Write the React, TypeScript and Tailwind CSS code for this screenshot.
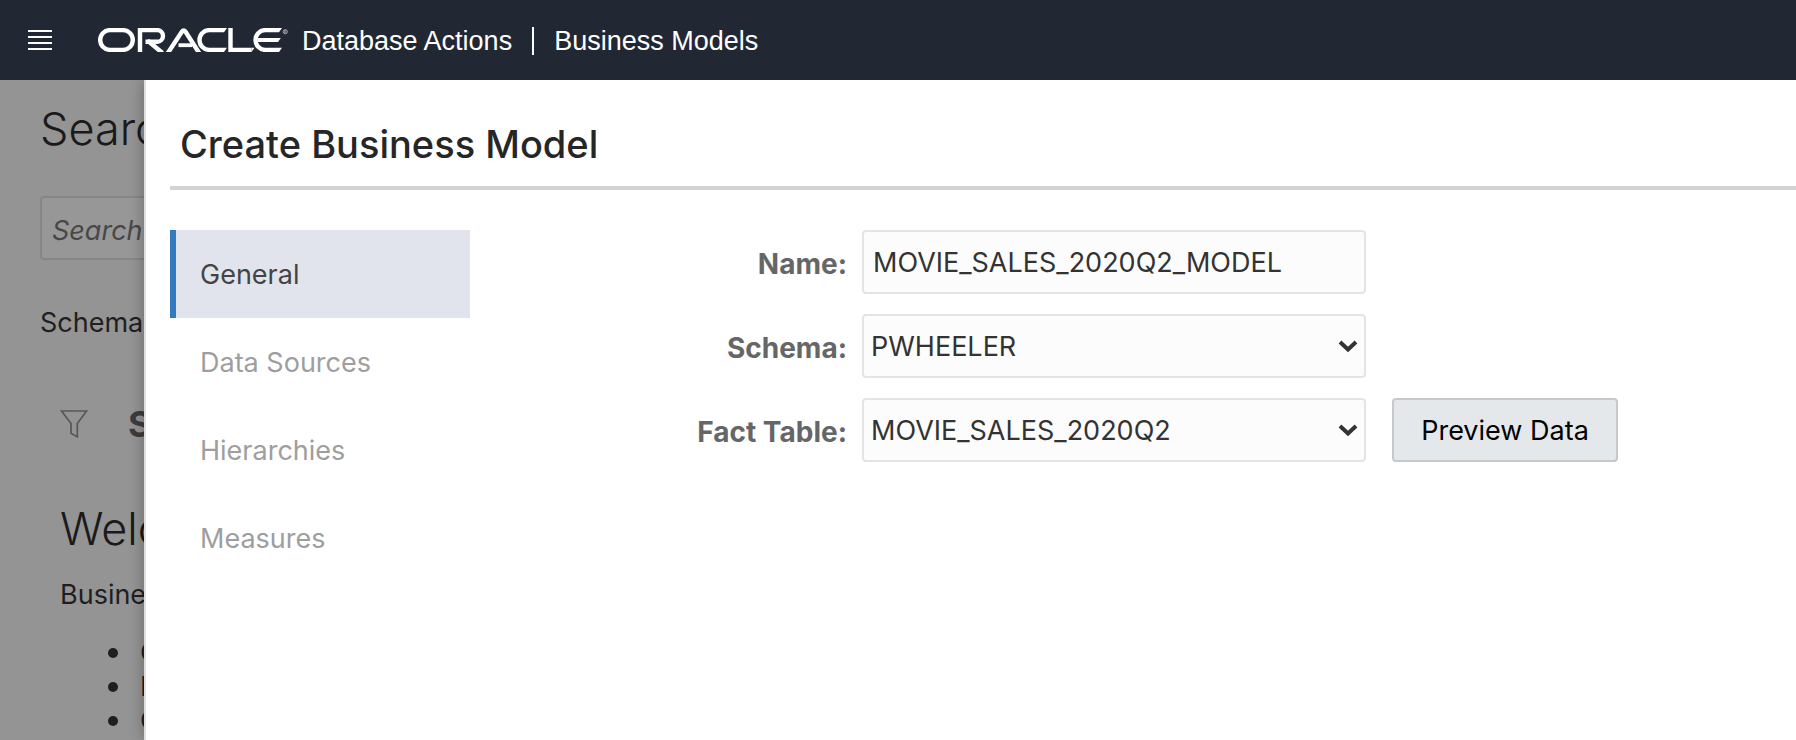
import type { ReactNode } from 'react'

function OracleLogo() {
  return (
    <svg viewBox="0 0 190 24" className="h-6 w-[190px]" role="img" aria-label="ORACLE" fill="none" stroke="#fff" strokeWidth="4.400">
      <rect x="2.200" y="2.100" width="32.600" height="19.800" rx="9.900" />
      <path d="M42 24V2.100H59.200A5.600 5.600 0 0 1 59.200 13.700H47.500" />
      <path d="M49.500 12.500L64.500 25" />
      <path d="M69.500 25.500L84 3.600Q85.700 1.200 87.400 3.600L101.500 25.500" />
      <path d="M80.500 17.200H94" strokeWidth="3.800" />
      <path d="M126 2.100H111.400A9.900 9.900 0 0 0 111.400 21.900H126" />
      <path d="M132.500 0V21.900H153.500" />
      <path d="M181 2.100H167.400A9.900 9.900 0 0 0 167.400 21.900H181" />
      <path d="M160 12H180" strokeWidth="4" />
      <path
        d="M126 0H129L126 4.300ZM126 19.700H129L126 24ZM153.500 19.700H156.500L153.500 24ZM181 0H184L181 4.300ZM180 10H182.800L180 14ZM181 19.700H184L181 24Z"
        fill="#fff"
        stroke="none"
      />
      <g stroke="#b9bcc2">
        <circle cx="187.300" cy="3.700" r="2.100" strokeWidth="0.800" />
        <path d="M186.600 5V2.500H187.600A0.600 0.600 0 0 1 187.600 3.800H186.800M187.500 3.800L188.200 5" strokeWidth="0.600" />
      </g>
    </svg>
  )
}

function FilterIcon() {
  return (
    <svg viewBox="0 0 28 28" className="size-7 shrink-0" fill="none" stroke="#585858" strokeWidth="1.700" aria-hidden="true">
      <path d="M1.500 1H26.500L17.300 13.500V26.800L11 23.200V13.500Z" />
    </svg>
  )
}

const steps = ['Create', 'Inspect', 'Compare']

function BackgroundPage() {
  return (
    <div className="w-36 shrink-0 overflow-hidden bg-[#949494] text-[27px] whitespace-nowrap text-[#1f1f1f]">
      <div className="pt-6 pl-10">
        <h2 className="text-[45px] leading-[50px] font-light text-[#1a1a1a]">Search</h2>
        <input
          aria-label="Search"
          placeholder="Search"
          className="mt-[42px] block h-16 w-96 rounded-sm border-2 border-[#868686] bg-[#979797] px-2.5 pt-1 text-[27px] italic placeholder:text-[#484848]"
        />
        <p className="mt-[45px] leading-9">Schema</p>
      </div>
      <div className="pt-[63px] pl-[60px]">
        <div className="flex items-center gap-10 text-4xl leading-10 font-bold text-[#3c3c3c]">
          <FilterIcon />
          Schema
        </div>
        <h2 className="mt-[55px] text-[45px] leading-[60px] font-light text-[#1a1a1a]">Welcome</h2>
        <p className="mt-[18px] leading-9">Business Models</p>
        <ul className="mt-[23px] pl-12 leading-[34px]">
          {steps.map((step) => (
            <li key={step} className="flex items-center gap-[22px]">
              <span className="size-2.5 shrink-0 rounded-full bg-[#1f1f1f]" />
              {step}
            </li>
          ))}
        </ul>
      </div>
    </div>
  )
}

const tabs = ['General', 'Data Sources', 'Hierarchies', 'Measures']
const fieldClass =
  'block h-16 w-full appearance-none rounded-sm border-2 border-[#e4e4e4] bg-[#fcfcfc] text-[27px] text-[#333]'

function Field({ id, label, children }: { id: string; label: string; children: ReactNode }) {
  return (
    <div className="flex items-center">
      <label htmlFor={id} className="w-[310px] shrink-0 pt-1 pr-[15px] text-right text-[28px] font-bold text-[#666]">
        {label}
      </label>
      {children}
    </div>
  )
}

function SelectField({ id, value }: { id: string; value: string }) {
  return (
    <div className="relative w-[504px]">
      <select id={id} className={`${fieldClass} px-[7px] pt-0.5`} defaultValue={value}>
        <option>{value}</option>
      </select>
      <svg viewBox="0 0 20 14" className="pointer-events-none absolute top-[26px] right-2 h-3.5 w-5" fill="none" stroke="#333" strokeWidth="4" aria-hidden="true">
        <path d="M2 2L10 9.500L18 2" />
      </svg>
    </div>
  )
}

export default function App() {
  return (
    <div className="flex h-screen flex-col overflow-hidden font-['Inter','Noto_Sans',sans-serif]">
      <header className="z-20 flex h-20 shrink-0 items-center bg-[#212834] pl-7 text-white">
        <button aria-label="Menu" className="mr-[46px]">
          <svg viewBox="0 0 24 20" className="h-5 w-6" stroke="#fff" strokeWidth="2" aria-hidden="true">
            <path d="M0 1H24M0 7H24M0 13H24M0 19H24" />
          </svg>
        </button>
        <OracleLogo />
        <span className="ml-3.5 flex items-center gap-5 pt-0.5 font-['Liberation_Sans',sans-serif] text-[27px] leading-8">
          <span>Database Actions</span>
          <span className="h-7 w-0.5 bg-white" />
          <span>Business Models</span>
        </span>
      </header>
      <div className="flex min-h-0 flex-1">
        <BackgroundPage />
        <main className="z-10 min-w-0 flex-1 border-l-2 border-[#dedede] bg-white pl-6 text-[27px] leading-9 shadow-[0_0_14px_rgba(0,0,0,0.3)]">
          <h1 className="border-b-4 border-[#d3d3d3] pt-[42px] pb-5 pl-2.5 text-[38px] leading-[44px] font-medium text-[#262626]">
            Create Business Model
          </h1>
          <div className="flex pt-10">
            <nav className="flex w-[300px] shrink-0 flex-col">
              {tabs.map((tab, i) => (
                <button
                  key={tab}
                  className={
                    i === 0
                      ? 'h-[88px] border-l-6 border-[#337ac0] bg-[#e1e4ec] pt-0.5 pl-6 text-left text-[#444]'
                      : 'h-[88px] border-l-6 border-transparent pt-0.5 pl-6 text-left text-[#9e9e9e]'
                  }
                >
                  {tab}
                </button>
              ))}
            </nav>
            <form className="ml-[82px] flex flex-col gap-5">
              <Field id="name" label="Name:">
                <div className="w-[504px]">
                  <input id="name" className={`${fieldClass} px-[9px]`} defaultValue="MOVIE_SALES_2020Q2_MODEL" />
                </div>
              </Field>
              <Field id="schema" label="Schema:">
                <SelectField id="schema" value="PWHEELER" />
              </Field>
              <Field id="fact" label="Fact Table:">
                <SelectField id="fact" value="MOVIE_SALES_2020Q2" />
                <button type="button" className="ml-[26px] h-16 w-[226px] rounded-sm border-2 border-[#c6c8ca] bg-[#e4e8eb] pt-0.5 text-black">
                  Preview Data
                </button>
              </Field>
            </form>
          </div>
        </main>
      </div>
    </div>
  )
}
